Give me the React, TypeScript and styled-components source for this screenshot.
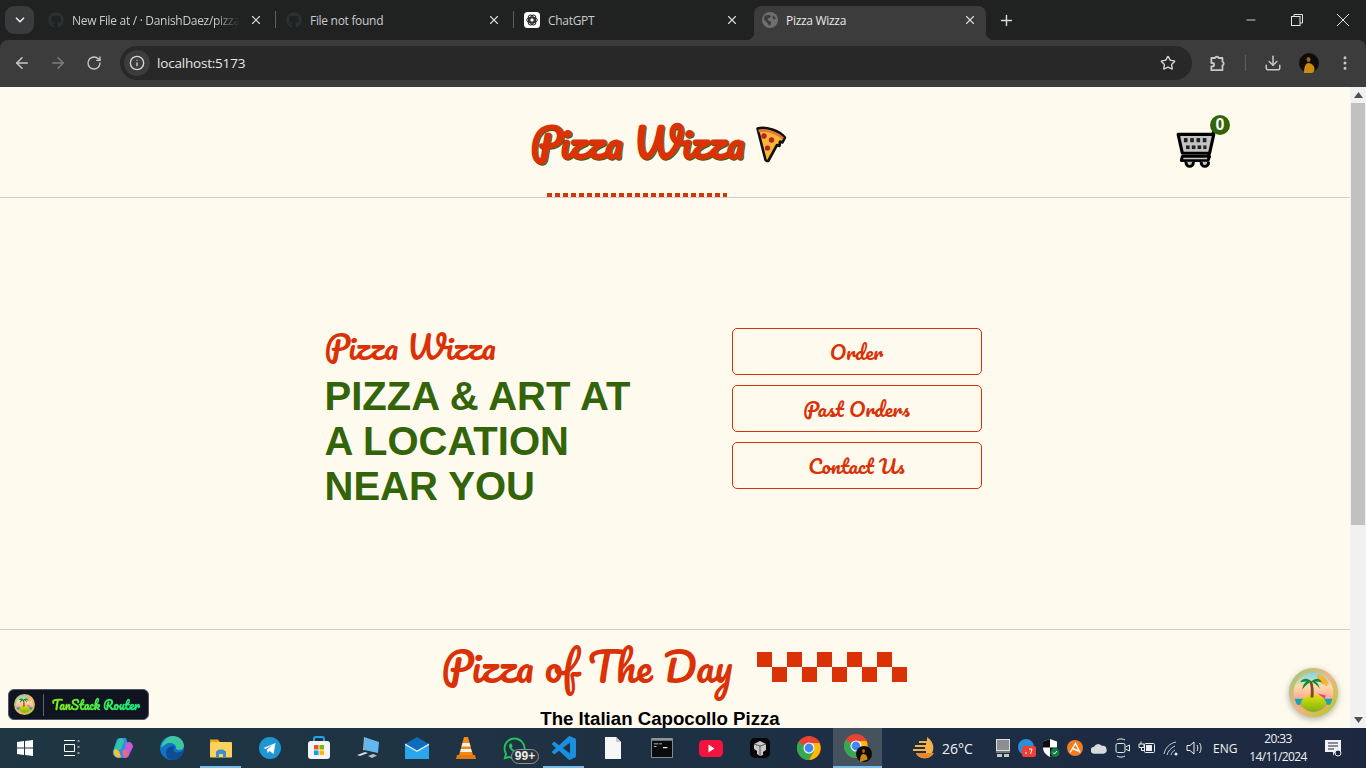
import React from "react";
import styled, { createGlobalStyle } from "styled-components";
import { ArrowLeft, ArrowRight, RotateCw, Info, Star, Download, EllipsisVertical, ChevronDown, X, Plus, Minus } from "lucide-react";
import { FaGithub, FaWhatsapp } from "react-icons/fa";

const SCRIPT = `Pacifico, "Liberation Serif", cursive`;
const RED = "#da3106";
const GREEN = "#33640a";
const CREAM = "#fffaee";

const Global = createGlobalStyle`
  html, body { margin: 0; padding: 0; height: 100%; overflow: hidden; background: ${CREAM}; }
  * { box-sizing: border-box; }
  body { font-family: "Liberation Sans", Arial, sans-serif; }
`;

const Screen = styled.div`
  width: 1366px; height: 768px; display: flex; flex-direction: column; overflow: hidden; position: relative; background: #202221;
`;

/* ---------- browser chrome ---------- */
const TabStrip = styled.div`
  height: 40px; background: #202221; display: flex; align-items: flex-end; padding-left: 5px; flex: none;
`;
const TabSearch = styled.div`
  width: 29px; height: 28px; margin-bottom: 6px; margin-right: 6px; border-radius: 9px; background: #3a3b3c;
  display: flex; align-items: center; justify-content: center; color: #e6e6e6; flex: none;
`;
const TabList = styled.div`
  display: flex; gap: 6px; align-items: flex-end;
`;
const Tab = styled.div<{ $active?: boolean; $sep?: boolean }>`
  width: 232px; height: 34px; display: flex; align-items: center; padding: 0 8px 6px 8px; position: relative;
  border-radius: 8px 8px 0 0; color: ${p => (p.$active ? "#e8e8e8" : "#c9cbcc")};
  background: ${p => (p.$active ? "#3c3c3c" : "transparent")};
  font: 12px "Open Sans", "Liberation Sans", sans-serif;
  &::after {
    content: ""; display: ${p => (p.$sep ? "block" : "none")}; position: absolute; right: -4px; top: 5px; width: 1px; height: 17px; background: #5c5e60;
  }
  ${p => p.$active && `
    &::before, &::after {
      content: ""; display: block; position: absolute; bottom: 0; width: 8px; height: 8px; top: auto; background: #3c3c3c;
    }
    &::before { left: -8px; -webkit-mask: radial-gradient(circle at 0 0, transparent 8px, #000 8.5px); mask: radial-gradient(circle at 0 0, transparent 8px, #000 8.5px); }
    &::after { right: -8px; -webkit-mask: radial-gradient(circle at 100% 0, transparent 8px, #000 8.5px); mask: radial-gradient(circle at 100% 0, transparent 8px, #000 8.5px); }
  `}
`;
const TabIcon = styled.span`
  width: 16px; height: 16px; margin-right: 8px; display: flex; flex: none; align-items: center; justify-content: center;
`;
const TabTitle = styled.span<{ $fade?: boolean }>`
  flex: 1; white-space: nowrap; overflow: hidden; font-size: 12px; letter-spacing: -0.3px; margin-right: 8px;
  ${p => p.$fade && `
    -webkit-mask-image: linear-gradient(90deg, #000 85%, transparent);
    mask-image: linear-gradient(90deg, #000 85%, transparent);
  `}
`;
const TabClose = styled.span`
  width: 16px; height: 16px; display: flex; align-items: center; justify-content: center; color: #d5d7d8; flex: none;
`;
const NewTab = styled.span`
  margin: 0 0 6px 10px; width: 20px; height: 28px; display: flex; align-items: center; justify-content: center; color: #d9dadb;
`;
const WindowControls = styled.div`
  margin-left: auto; display: flex; height: 40px; align-items: center; color: #e6e6e6;
`;
const WindowBtn = styled.span`
  width: 46px; height: 40px; display: flex; align-items: center; justify-content: center;
`;
const Toolbar = styled.div`
  height: 47px; background: #3c3c3c; display: flex; align-items: center; padding: 0 0 1px 8px; flex: none; border-radius: 8px 8px 0 0;
`;
const NavBtn = styled.span<{ $dim?: boolean }>`
  width: 28px; height: 28px; margin-right: 8px; display: flex; align-items: center; justify-content: center;
  color: ${p => (p.$dim ? "#7b7c7d" : "#c8c9ca")}; flex: none;
`;
const Omnibox = styled.div`
  width: 1072px; height: 34px; margin-left: 4px; background: #282828; border-radius: 17px; display: flex; align-items: center;
  color: #e6e6e6; font: 13.5px "Open Sans", "Liberation Sans", sans-serif; padding-right: 16px; flex: none;
`;
const SiteInfo = styled.span`
  width: 26px; height: 26px; margin: 0 7px 0 4px; border-radius: 50%; background: #3c3c3c; display: flex; align-items: center; justify-content: center; color: #d6d7d8;
`;
const Url = styled.span`
  flex: 1; letter-spacing: -0.2px;
`;
const ToolGroup = styled.div`
  display: flex; align-items: center; color: #c8c9ca; margin-left: 12px;
`;
const ToolBtn = styled.span<{ $gap?: boolean }>`
  width: 28px; height: 28px; display: flex; align-items: center; justify-content: center; margin-left: ${p => (p.$gap ? "8px" : "0")};
`;
const ToolSep = styled.span`
  width: 1px; height: 16px; background: #5d5e60; margin: 0 13px;
`;

/* ---------- page ---------- */
const Viewport = styled.div`
  flex: 1; display: flex; min-height: 0; background: ${CREAM}; position: relative; overflow: hidden;
`;
const Page = styled.main`
  flex: 1; min-width: 0;
`;
const Header = styled.header`
  height: 111px; border-bottom: 1px solid #cfcfcb; display: flex; justify-content: center; position: relative;
`;
const Brand = styled.div`
  display: flex; align-items: center; gap: 10px; height: 110px; margin-left: -33px;
  svg { margin-top: 4px; }
`;
const BrandName = styled.h1`
  margin: 0; font: 700 40px ${SCRIPT}; color: ${RED}; text-shadow: 1px 1px 0 ${GREEN}; white-space: nowrap;
`;
const DottedRule = styled.span`
  position: absolute; left: 547px; bottom: 0; width: 180px; height: 4px;
  background: repeating-linear-gradient(90deg, ${RED} 0 5px, transparent 5px 8px);
`;
const Cart = styled.div`
  position: absolute; left: 1175px; top: 28px; width: 56px; height: 56px;
  svg { display: block; margin-top: 12px; }
`;
const CartBadge = styled.span`
  position: absolute; left: 35px; top: 0; width: 20px; height: 20px; border-radius: 50%; background: ${GREEN};
  color: #fff; font: 700 16px/20px "Liberation Sans", sans-serif; text-align: center;
`;
const Hero = styled.section`
  height: 432px; border-bottom: 1px solid #cfcfcb; display: flex; justify-content: center; padding: 130px 0 0 0;
`;
const HeroInner = styled.div`
  display: flex; gap: 100px; margin-left: -44px;
`;
const HeroText = styled.div`
  width: 307px;
`;
const HeroBrand = styled.div`
  font: 400 32px/42px ${SCRIPT}; color: ${RED}; white-space: nowrap; margin: -3px 0 7px;
`;
const HeroTitle = styled.h2`
  margin: 0; font: 700 40px/45px "Liberation Sans", Arial, sans-serif; color: ${GREEN};
`;
const HeroActions = styled.nav`
  display: flex; flex-direction: column; gap: 10px; width: 250px;
`;
const HeroButton = styled.a`
  height: 47px; border: 1px solid ${RED}; border-radius: 5px; color: ${RED}; display: flex; align-items: center; justify-content: center;
  font: 400 20px ${SCRIPT};
`;
const DaySection = styled.section`
  display: flex; flex-direction: column; align-items: center;
`;
const DayRow = styled.div`
  display: flex; align-items: center; gap: 25px; height: 77px; margin-right: 1px;
`;
const DayTitle = styled.h2`
  margin: 0 0 6px; font: 400 40px ${SCRIPT}; color: ${RED}; white-space: nowrap;
`;
const Checker = styled.div`
  width: 150px; height: 30px; margin-top: -3px;
  background:
    conic-gradient(transparent 25%, ${RED} 0 50%, transparent 0 75%, ${RED} 0) 0 0 / 30px 30px;
`;
const PizzaName = styled.div`
  font: 700 18.67px/24px "Liberation Sans", Arial, sans-serif; color: #000; margin-right: 30px;
`;
const DevButton = styled.div`
  position: absolute; left: 8px; top: 602px; width: 141px; height: 31px; background: #0f1420; border: 1px solid #4b5563; border-radius: 6px;
  display: flex; align-items: center; padding-left: 5px;
`;
const DevDivider = styled.span`
  width: 1px; height: 22px; background: #5b6475; margin: 0 8px;
`;
const DevText = styled.span`
  font: 700 12px ${SCRIPT}; white-space: nowrap;
  background: linear-gradient(to right, #84e616, #10e981); -webkit-background-clip: text; background-clip: text; color: transparent;
`;
const DevFab = styled.div`
  position: absolute; left: 1289px; top: 581px; width: 49px; height: 49px; border-radius: 50%; filter: drop-shadow(0 2px 3px rgba(0,0,0,.3));
`;
const ScrollTrack = styled.div`
  width: 16px; background: #f1f1f1; flex: none; display: flex; flex-direction: column; align-items: center;
`;
const ScrollArrow = styled.div`
  height: 16px; width: 16px; display: flex; align-items: center; justify-content: center;
`;
const ScrollThumb = styled.div`
  width: 14px; height: 422px; background: #c1c1c1; flex: none;
`;
const ScrollRest = styled.div`
  flex: 1;
`;

/* ---------- taskbar ---------- */
const Taskbar = styled.footer`
  height: 40px; flex: none; display: flex; align-items: center; color: #f2f2f2; background: linear-gradient(90deg, #1f3742, #1d2f44 60%, #1c2840);
`;
const Slot = styled.div<{ $active?: boolean; $open?: boolean }>`
  width: 49px; height: 40px; display: flex; align-items: center; justify-content: center; position: relative; flex: none;
  background: ${p => (p.$active ? "#44535e" : "transparent")};
  &::after {
    content: ""; display: ${p => (p.$open || p.$active ? "block" : "none")}; position: absolute; bottom: 0; height: 2px; background: #76b9ed;
    left: ${p => (p.$active ? "0" : "4px")}; right: ${p => (p.$active ? "0" : "4px")};
  }
`;
const Badge = styled.span`
  position: absolute; left: 21px; top: 21px; height: 15px; width: 28px; border: 1px solid #8b9296; border-radius: 8px; background: #2a3338; font: 700 12px/13px "Liberation Sans", sans-serif; color: #eee; text-align: center; z-index: 1;
`;
const Tray = styled.div`
  flex: 1; display: flex; align-items: center; height: 40px;
`;
const Weather = styled.div`
  display: flex; align-items: center; gap: 6px; margin-left: 28px; width: 78px; font: 14px "Open Sans", "Liberation Sans", sans-serif; white-space: nowrap;
`;
const TrayIcons = styled.div`
  margin-left: 3px; display: flex; align-items: center;
`;
const TrayIcon = styled.span`
  width: 24px; height: 24px; display: flex; align-items: center; justify-content: center; flex: none;
`;
const Lang = styled.span`
  font: 12px "Open Sans", "Liberation Sans", sans-serif; margin-left: 6px; width: 34px;
`;
const Clock = styled.div`
  width: 66px; margin-left: -2px; text-align: center; font: 12px/18px "Open Sans", "Liberation Sans", sans-serif; letter-spacing: -0.6px; white-space: nowrap;
`;
const Notify = styled.span`
  margin-left: 13px; display: flex;
`;

/* ---------- drawings ---------- */
const ChatGptIcon = () => (
  <svg width="16" height="16" viewBox="0 0 16 16">
    <rect width="16" height="16" rx="3.5" fill="#fff" />
    <g fill="none" stroke="#222" strokeWidth="1">
      <circle cx="8" cy="8" r="2.2" />
      <ellipse cx="8" cy="8" rx="5.3" ry="2.8" />
      <ellipse cx="8" cy="8" rx="5.3" ry="2.8" transform="rotate(60 8 8)" />
      <ellipse cx="8" cy="8" rx="5.3" ry="2.8" transform="rotate(120 8 8)" />
    </g>
  </svg>
);
const GlobeIcon = () => (
  <svg width="16" height="16" viewBox="0 0 16 16">
    <circle cx="8" cy="8" r="8" fill="#6d7073" />
    <path d="M3 3.5C5 3 7 2.5 8.5 3.5 9.5 5 7.5 6 6 6.5 5 7.5 6.5 9 8 9c1.5.5 1 2.5.5 4-1 .5-2 .2-2.4-1C5.5 10.5 3.5 9.500 2 7.500 2 6 2.400 4.500 3 3.500zM11 3.500c1.500.5 2.500 2 2.800 3.500L11.500 7.500 10.500 5.500z" fill="#3c3c3c" />
  </svg>
);
const PuzzleIcon = () => (
  <svg width="20" height="20" viewBox="0 0 18 18" fill="none" stroke="currentColor" strokeWidth="1.600" strokeLinejoin="round">
    <path d="M3 4.500h3.200a2 2 0 0 1 3.600 0H13v3.200a2 2 0 0 1 0 3.600V15.500H3v-3.500h1a1.500 1.500 0 0 0 0-3H3z" />
  </svg>
);
const Avatar = () => (
  <svg width="20" height="20" viewBox="0 0 20 20">
    <circle cx="10" cy="10" r="10" fill="#120c08" />
    <ellipse cx="9.500" cy="6.500" rx="2" ry="2.500" fill="#a0621c" />
    <path d="M5 20c0-6 1.500-10 4.500-10s6 3 6 6c0 2-1 3.500-2.500 4z" fill="#c98c10" />
  </svg>
);
const RestoreIcon = () => (
  <svg width="12" height="12" viewBox="0 0 12 12" fill="none" stroke="currentColor">
    <rect x=".5" y="2.500" width="8.500" height="9" />
    <path d="M3 2.500V.5h8.500V9H9" />
  </svg>
);
const CloseThin = () => (
  <svg width="14" height="14" viewBox="0 0 14 14" stroke="currentColor" fill="none"><path d="M1 1l12 12M13 1L1 13" /></svg>
);
const PizzaSlice = () => (
  <svg width="32" height="38" viewBox="0 0 32 38">
    <path d="M2.500 3.500C11 1.500 24 5 30 12.500L27.500 17.500 25 16.500 24.500 21 22 20 13.500 35.500C12.500 36.500 11 36 10.500 35z" fill="#f7b733" stroke="#111" strokeWidth="2.600" strokeLinejoin="round" />
    <path d="M3.500 6C12 4.500 22 8 28 13.500" fill="none" stroke="#e8743b" strokeWidth="2.400" />
    <circle cx="9" cy="11" r="2.700" fill="#b5202a" />
    <circle cx="16.500" cy="15" r="2.700" fill="#b5202a" />
    <circle cx="12.500" cy="23" r="2.600" fill="#b5202a" />
  </svg>
);
const CartIcon = () => (
  <svg width="44" height="41" viewBox="0 0 42 39">
    <path d="M38 1l-2 6-4 21" fill="none" stroke="#000" strokeWidth="2.800" strokeLinecap="round" strokeLinejoin="round" />
    <path d="M3 7h34l-4 18H7z" fill="#c4c4c4" stroke="#000" strokeWidth="3" strokeLinejoin="round" />
    <path d="M7 28h26l-1.500 4H6z" fill="#c4c4c4" stroke="#000" strokeWidth="2.800" strokeLinejoin="round" />
    <g fill="#222">
      <rect x="8.500" y="10.500" width="3.500" height="4" /><rect x="14.500" y="10.500" width="3.500" height="4" /><rect x="20.500" y="10.500" width="3.500" height="4" /><rect x="26.500" y="10.500" width="3.500" height="4" />
      <rect x="10.500" y="17.500" width="3.500" height="3.500" /><rect x="16" y="17.500" width="3.500" height="3.500" /><rect x="21.500" y="17.500" width="3.500" height="3.500" /><rect x="27" y="17.500" width="3" height="3.500" />
    </g>
    <path d="M10.500 33v1a3.500 3.500 0 0 0 7 0v-1M25 33v1a3.500 3.500 0 0 0 7 0v-1" fill="#c4c4c4" stroke="#000" strokeWidth="2.800" />
  </svg>
);
const IslandLogo = ({ size }: { size: number }) => (
  <svg width={size} height={size} viewBox="0 0 48 48">
    <defs>
      <linearGradient id={`sky${size}`} x1="0" y1="0" x2="0" y2="1"><stop offset="0" stopColor="#7fd8e6" /><stop offset=".35" stopColor="#ffd9a8" /><stop offset=".75" stopColor="#ff9c92" /></linearGradient>
      <linearGradient id={`ring${size}`} x1="0" y1="0" x2="1" y2="1"><stop offset="0" stopColor="#8ccf6a" /><stop offset=".5" stopColor="#f4b48a" /><stop offset="1" stopColor="#a5cf12" /></linearGradient>
      <linearGradient id={`hill${size}`} x1="0" y1="0" x2="0" y2="1"><stop offset="0" stopColor="#e4e012" /><stop offset="1" stopColor="#7cb30e" /></linearGradient>
    </defs>
    <circle cx="24" cy="24" r="24" fill={`url(#ring${size})`} />
    <circle cx="24" cy="24" r="19.500" fill={`url(#sky${size})`} />
    <path d="M29 5.500a7.500 7.500 0 0 0 10 10l-1.500-3-2-2.500-3-2.500z" fill="#f9b52c" />
    <circle cx="30" cy="12" r="1" fill="#f6a35a" /><circle cx="33" cy="15" r="1" fill="#f6a35a" /><circle cx="36.500" cy="17" r="1" fill="#f6a35a" /><circle cx="28.500" cy="8.500" r="1" fill="#f6a35a" />
    <path d="M5.500 30h37a20 20 0 0 1-2.500 6H8a20 20 0 0 1-2.500-6z" fill="#16a3b5" />
    <path d="M28 25l8 2-1 3z" fill="#e83e7a" />
    <path d="M11 36c1-6 7-10 13-10s12 4 13 10c-3 4-8 7-13 7s-10-3-13-7z" fill={`url(#hill${size})`} />
    <path d="M20 13c1.500 4 1.800 10 1 16h3c.6-6 0-12-1.500-16z" fill="#7a4a21" />
    <path d="M22 13c-4-4-9-3-11 1 4-1 7-1 11-1zm0 0c4-4 9-3 10 1-4-1-7-1-10-1zm0 0c-5-1-8 2-9 8 3-4 6-6 9-8zm0 0c4-1 7 2 8 7-2-3-5-5-8-7z" fill="#0b8a3a" />
  </svg>
);

const Win = () => (<svg width="18" height="18" viewBox="0 0 18 18" fill="#fff"><path d="M1 3l7-1v6.500H1zM9 1.900L17 1v7.500H9zM1 9.500h7V16l-7-1zM9 9.500h8V17l-8-1z" /></svg>);
const TaskView = () => (<svg width="18" height="18" viewBox="0 0 18 18" fill="none" stroke="#fff" style={{ marginRight: 5 }}><path d="M2.500 5.500h10v7h-10zM2 1.500h11M2 16.500h11M15.500 2h2M15.500 8h2M15.500 14h2" /></svg>);
const Copilot = () => (<svg width="24" height="24" viewBox="0 0 24 24"><path d="M9 2h6l3 9-4 11H8C4 22 1 19 2 15l3-9c.6-2.500 2-4 4-4z" fill="#2f8fe8" /><path d="M6 6c1-3 3-4 5-4l2 3-3 8-4 2-4 1z" fill="#2fc6a2" /><path d="M14 22c3 0 4-2 5-5l3-6c0-3-2-5-4-5l-4 1 1 8z" fill="#c85ad6" /><path d="M4 20c-2-3-2-6 1-7l3 2 2 6c-2 1-4 1-6-1z" fill="#f5c033" /><path d="M13 22l-2-7 4-2 2 4c-.5 3-2 5-4 5z" fill="#f0658a" /></svg>);
const Edge = () => (<svg width="24" height="24" viewBox="0 0 24 24"><circle cx="12" cy="12" r="12" fill="#1173c7" /><path d="M1 12C2 5 7 0 13 0c6 0 10.500 4 11 9.500.2 3.500-3 5-6 4.500-2-.5-2.500-2-2-3.500C15 7 9 6 5.500 8.500 3 10 1.800 11 1 12z" fill="#3dc7a0" /><path d="M24 13c0 6-5 11-11 11-5 0-7-3-7-7 0-5 5-8 9-6-2 2-1.500 5 1.500 5.500 3 .5 6-1 7.500-3.500z" fill="#0f4d93" /></svg>);
const Explorer = () => (<svg width="22" height="20" viewBox="0 0 22 20"><path d="M0 1.500h8l2 2.500H0z" fill="#e9a422" /><rect y="4" width="22" height="15.500" rx="1" fill="#fcd25a" /><path d="M6 19.500v-6l3-2h4l3 2v6h-3v-3.500H9v3.500z" fill="#3b8ed1" /></svg>);
const Telegram = () => (<svg width="22" height="22" viewBox="0 0 22 22"><circle cx="11" cy="11" r="11" fill="#1e96d4" /><path d="M4.500 11l12-5-2 11-4-3-2 2-.500-3.500 6-5-7.500 4.500z" fill="#fff" /></svg>);
const Store = () => (<svg width="24" height="24" viewBox="0 0 24 24"><path d="M7 6V3c0-1 1-2 2-2h6c1 0 2 1 2 2v3" fill="none" stroke="#1ea5e8" strokeWidth="2" /><rect x="1" y="5" width="22" height="18" rx="3" fill="#f4f4f4" /><rect x="7" y="9" width="4.500" height="4.500" fill="#f25022" /><rect x="12.500" y="9" width="4.500" height="4.500" fill="#7fba00" /><rect x="7" y="14.500" width="4.500" height="4.500" fill="#00a4ef" /><rect x="12.500" y="14.500" width="4.500" height="4.500" fill="#ffb900" /></svg>);
const Pc = () => (<svg width="24" height="24" viewBox="0 0 24 24"><path d="M8 1l15 5-1 11-14-3z" fill="#62b7f0" /><path d="M8 1l-1 13 1 .5L9 2z" fill="#a7adb2" /><path d="M1 19l8-3 3 1-8 3z" fill="#d8dcdf" /><path d="M12 20l5-2 4 1.500-5 2.500z" fill="#b8bdc0" /></svg>);
const Mail = () => (<svg width="24" height="22" viewBox="0 0 24 22"><path d="M0 7l12-7 12 7v15H0z" fill="#0f6cbd" /><path d="M0 7l12 8 12-8v15H0z" fill="#2ba6ec" /><path d="M0 6.500l12 7 12-7v1.500L12 15 0 8z" fill="#e8f4fc" /></svg>);
const Vlc = () => (<svg width="20" height="24" viewBox="0 0 20 24"><path d="M8 1h4l5 18H3z" fill="#f28a12" /><path d="M6.500 7h7l1 3.500h-9zM5 13h10l.8 3H4.200z" fill="#f2f2f2" /><path d="M1 19h18l1 4H0z" fill="#e67a10" /></svg>);
const VsCode = () => (<svg width="24" height="24" viewBox="0 0 24 24"><path d="M23.150 2.587L18.210.21a1.494 1.494 0 0 0-1.705.29l-9.460 8.630-4.120-3.128a.999.999 0 0 0-1.276.057L.327 7.261A1 1 0 0 0 .326 8.740L3.899 12 .326 15.260a1 1 0 0 0 .001 1.479L1.650 17.940a.999.999 0 0 0 1.276.057l4.120-3.128 9.460 8.630a1.492 1.492 0 0 0 1.704.29l4.942-2.377A1.500 1.500 0 0 0 24 20.060V3.939a1.500 1.500 0 0 0-.850-1.352zm-5.146 14.861L10.826 12l7.178-5.448v10.896z" fill="#1a8ee0" /></svg>);
const FileI = () => (<svg width="16" height="22" viewBox="0 0 16 22"><path d="M0 0h11l5 5v17H0z" fill="#f7f7f7" /><path d="M11 0v5h5z" fill="#c8cdd0" /></svg>);
const Cmd = () => (<svg width="22" height="20" viewBox="0 0 24 22"><rect width="24" height="22" rx="1" fill="#8e959a" /><rect x="1" y="3" width="22" height="18" fill="#0b0b0b" /><path d="M3 6h5v1H3zM9 6h3v1H9zM3 9h3v1H3zM13 10h5v1.200h-5z" fill="#e8e8e8" /></svg>);
const Yt = () => (<svg width="24" height="17" viewBox="0 0 24 17"><rect width="24" height="17" rx="4.500" fill="#f4123f" /><path d="M9.500 4.500l6 4-6 4z" fill="#fff" /></svg>);
const Box = () => (<svg width="20" height="20" viewBox="0 0 20 20"><rect width="20" height="20" rx="5" fill="#050505" /><path d="M4 6l6-3 6 3v6l-3 2v3l-3 1-3-2v-3l-3-2z" fill="#c9c9c9" /><path d="M10 8v10M4 6l6 2 6-2" stroke="#555" fill="none" /></svg>);
const Chrome = () => (<svg width="24" height="24" viewBox="0 0 24 24"><circle cx="12" cy="12" r="12" fill="#ea4335" /><path d="M12 12L1.600 6A12 12 0 0 0 12 24l6-10.400z" fill="#34a853" /><path d="M12 7h10.400A12 12 0 0 1 12 24l5.200-9z" fill="#fbbc05" /><circle cx="12" cy="12" r="5.500" fill="#fff" /><circle cx="12" cy="12" r="4.400" fill="#4285f4" /></svg>);
const ChromeProfile = () => (<svg width="28" height="28" viewBox="0 0 28 28"><g><circle cx="12" cy="12" r="12" fill="#ea4335" /><path d="M12 12L1.600 6A12 12 0 0 0 12 24l6-10.400z" fill="#34a853" /><path d="M12 7h10.400A12 12 0 0 1 12 24l5.200-9z" fill="#fbbc05" /><circle cx="12" cy="12" r="5.500" fill="#fff" /><circle cx="12" cy="12" r="4.400" fill="#4285f4" /></g><circle cx="20" cy="20" r="8" fill="#120c08" /><ellipse cx="19.500" cy="17" rx="1.500" ry="2" fill="#a0621c" /><path d="M16 28c0-5 1-8 3.500-8s4 3 4 5.500z" fill="#c98c10" /></svg>);

const WeatherI = () => (<svg width="26" height="24" viewBox="0 0 26 24"><path d="M17 1c6 4 8 11 5 16-2 4-6 6-10 5-3-1-5-2-6-5h10v-2H3v-2h12v-2H5V9h11V7H9V5h8z" fill="#f3b24a" /><path d="M6 17h18c-2 4-6 6-11 5-3-1-6-2-7-5z" fill="#e8872c" /></svg>);
const Tray1 = () => (<svg width="14" height="18" viewBox="0 0 14 18"><rect x=".5" y=".5" width="13" height="11" fill="#8b8f92" stroke="#ddd" /><rect y="12" width="14" height="2" fill="#777" /><rect x="1" y="15" width="5" height="3" fill="#c4c6c8" /><rect x="8" y="15" width="5" height="3" fill="#c4c6c8" /></svg>);
const Tray2 = () => (<svg width="18" height="18" viewBox="0 0 18 18"><circle cx="8" cy="8" r="8" fill="#2d8fd6" /><rect x="4" y="7" width="14" height="11" rx="2" fill="#ee4035" /><path d="M7 14h2M11 10h3l-1.500 5" stroke="#fff" fill="none" /></svg>);
const Tray3 = () => (<svg width="18" height="18" viewBox="0 0 18 18"><path d="M8 0l7 2.500v6C15 13 12 16 8 18c-4-2-7-5-7-9.500v-6z" fill="#fff" /><path d="M8 0v8.500H1v-6zM8 8.500h7C15 13 12 16 8 18z" fill="#0c0c0c" /><circle cx="13" cy="13.500" r="4.500" fill="#107c41" /><path d="M11 13.500l1.500 1.500 2.500-3" stroke="#fff" fill="none" /></svg>);
const Tray4 = () => (<svg width="16" height="16" viewBox="0 0 16 16"><circle cx="8" cy="8" r="8" fill="#f47b20" /><path d="M3 12.500l5.500-9 4.500 9M5.500 8.500l6 2.500" stroke="#fff" strokeWidth="1.400" fill="none" /></svg>);
const Tray5 = () => (<svg width="16" height="11" viewBox="0 0 18 12"><path d="M4 12a4 4 0 0 1-.5-8A5 5 0 0 1 12 3a4.500 4.500 0 0 1 2 9z" fill="#d8dbde" /></svg>);
const Tray6 = () => (<svg width="16" height="20" viewBox="0 0 16 20" fill="none" stroke="#e8e8e8"><rect x="1" y="5.500" width="9" height="9" rx="1.500" /><path d="M2 2c2-1.500 6-1.500 8 0M2 18c2 1.500 6 1.500 8 0M10.500 9l4-2v6l-4-2" /></svg>);
const Tray7 = () => (<svg width="18" height="14" viewBox="0 0 18 14" fill="none" stroke="#eee"><rect x="6.500" y="2.500" width="10" height="9" rx="1" /><rect x="8.500" y="4.500" width="5" height="5" fill="#eee" /><path d="M1 3h5v3.500H1zM3 .5V3M3.500 6.500v3h3" /></svg>);
const Tray8 = () => (<svg width="16" height="16" viewBox="0 0 16 16" fill="none" stroke="#c9ced2"><path d="M1 14C2 8 7 3 13 2M4 15c1-4 4-7 8-9M8 15c.5-2 2-4 4-5" /><circle cx="13" cy="14" r="1.500" fill="#eee" stroke="none" /></svg>);
const Tray9 = () => (<svg width="18" height="16" viewBox="0 0 18 16" fill="none" stroke="#eee"><path d="M1 5.500h3L8 2v12L4 10.500H1zM11 5c1 2 1 4 0 6M13.500 3c2 3 2 7 0 10" /></svg>);
const NotifyI = () => (<svg width="18" height="18" viewBox="0 0 18 18"><path d="M1 1h16v12h-6l-2 4v-4H1z" fill="#f2f2f2" /><path d="M4 4h10M4 7h10M4 10h6" stroke="#1c2840" /><circle cx="14" cy="14" r="3" fill="#1c2840" stroke="#eee" /></svg>);

const tabs = [
  { title: "New File at / · DanishDaez/pizza-wizza", icon: <FaGithub size={16} color="#2a3036" />, sep: true, fade: true },
  { title: "File not found", icon: <FaGithub size={16} color="#2a3036" />, sep: true },
  { title: "ChatGPT", icon: <ChatGptIcon />, sep: false },
  { title: "Pizza Wizza", icon: <GlobeIcon />, active: true, sep: false },
];
const apps: { icon: React.ReactNode; open?: boolean; active?: boolean; badge?: string }[] = [
  { icon: <Win /> }, { icon: <TaskView /> }, { icon: <Copilot /> }, { icon: <Edge /> }, { icon: <Explorer />, open: true },
  { icon: <Telegram /> }, { icon: <Store /> }, { icon: <Pc /> }, { icon: <Mail /> }, { icon: <Vlc /> },
  { icon: <FaWhatsapp size={25} color="#25c45a" />, badge: "99+" }, { icon: <VsCode />, open: true },
  { icon: <FileI /> }, { icon: <Cmd /> }, { icon: <Yt /> },
  { icon: <Box /> }, { icon: <Chrome /> }, { icon: <ChromeProfile />, active: true },
];
const trayIcons = [<Tray1 />, <Tray2 />, <Tray3 />, <Tray4 />, <Tray5 />, <Tray6 />, <Tray7 />, <Tray8 />, <Tray9 />];

export default function App() {
  return (
    <Screen>
      <Global />
      <TabStrip>
        <TabSearch><ChevronDown size={14} strokeWidth={3} /></TabSearch>
        <TabList>
          {tabs.map(t => (
            <Tab key={t.title} $active={t.active} $sep={t.sep}>
              <TabIcon>{t.icon}</TabIcon>
              <TabTitle $fade={t.fade}>{t.title}</TabTitle>
              <TabClose><X size={14} strokeWidth={2} /></TabClose>
            </Tab>
          ))}
        </TabList>
        <NewTab><Plus size={17} strokeWidth={2} /></NewTab>
        <WindowControls>
          <WindowBtn><Minus size={14} strokeWidth={1.5} /></WindowBtn>
          <WindowBtn><RestoreIcon /></WindowBtn>
          <WindowBtn><CloseThin /></WindowBtn>
        </WindowControls>
      </TabStrip>
      <Toolbar>
        <NavBtn><ArrowLeft size={18} /></NavBtn>
        <NavBtn $dim><ArrowRight size={18} /></NavBtn>
        <NavBtn><RotateCw size={16} /></NavBtn>
        <Omnibox>
          <SiteInfo><Info size={16} /></SiteInfo>
          <Url>localhost:5173</Url>
          <Star size={16} color="#d6d7d8" strokeWidth={2} />
        </Omnibox>
        <ToolGroup>
          <ToolBtn><PuzzleIcon /></ToolBtn>
          <ToolSep />
          <ToolBtn><Download size={18} /></ToolBtn>
          <ToolBtn $gap><Avatar /></ToolBtn>
          <ToolBtn $gap><EllipsisVertical size={18} /></ToolBtn>
        </ToolGroup>
      </Toolbar>
      <Viewport>
        <Page>
          <Header>
            <Brand>
              <BrandName>Pizza Wizza</BrandName>
              <PizzaSlice />
            </Brand>
            <DottedRule />
            <Cart>
              <CartIcon />
              <CartBadge>0</CartBadge>
            </Cart>
          </Header>
          <Hero>
            <HeroInner>
              <HeroText>
                <HeroBrand>Pizza Wizza</HeroBrand>
                <HeroTitle>PIZZA &amp; ART AT A LOCATION NEAR YOU</HeroTitle>
              </HeroText>
              <HeroActions>
                <HeroButton>Order</HeroButton>
                <HeroButton>Past Orders</HeroButton>
                <HeroButton>Contact Us</HeroButton>
              </HeroActions>
            </HeroInner>
          </Hero>
          <DaySection>
            <DayRow>
              <DayTitle>Pizza of The Day</DayTitle>
              <Checker />
            </DayRow>
            <PizzaName>The Italian Capocollo Pizza</PizzaName>
          </DaySection>
        </Page>
        <ScrollTrack>
          <ScrollArrow><svg width="9" height="6" viewBox="0 0 9 6"><path d="M4.500 0L9 6H0z" fill="#505050" /></svg></ScrollArrow>
          <ScrollThumb />
          <ScrollRest />
          <ScrollArrow><svg width="9" height="6" viewBox="0 0 9 6"><path d="M4.500 6L9 0H0z" fill="#505050" /></svg></ScrollArrow>
        </ScrollTrack>
        <DevButton>
          <IslandLogo size={21} />
          <DevDivider />
          <DevText>TanStack Router</DevText>
        </DevButton>
        <DevFab><IslandLogo size={49} /></DevFab>
      </Viewport>
      <Taskbar>
        {apps.map((a, i) => (
          <Slot key={i} $active={a.active} $open={a.open}>
            {a.icon}
            {a.badge && <Badge>{a.badge}</Badge>}
          </Slot>
        ))}
        <Tray>
          <Weather><WeatherI /><span>26°C</span></Weather>
          <TrayIcons>{trayIcons.map((t, i) => <TrayIcon key={i}>{t}</TrayIcon>)}</TrayIcons>
          <Lang>ENG</Lang>
          <Clock>20:33<br />14/11/2024</Clock>
          <Notify><NotifyI /></Notify>
        </Tray>
      </Taskbar>
    </Screen>
  );
}
